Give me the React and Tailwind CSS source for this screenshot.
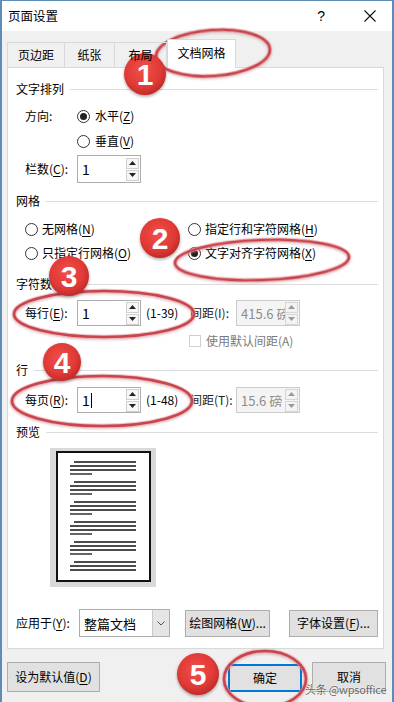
import React from "react";

const Tri = ({ up, gray }) => (
  <svg width="7" height="4" viewBox="0 0 7 4">
    {up ? (
      <polygon points="0,4 7,4 3.5,0" fill={gray ? "#9a9a9a" : "#222"} />
    ) : (
      <polygon points="0,0 7,0 3.5,4" fill={gray ? "#9a9a9a" : "#222"} />
    )}
  </svg>
);

const SpinButtons = ({ gray }) => (
  <div className="flex flex-col justify-center gap-[1px] pr-[1px]">
    <div className={`w-[13px] h-[11px] border flex items-center justify-center ${gray ? "border-[#d6d6d6] bg-[#f3f3f3]" : "border-[#cfcfcf] bg-[#f7f7f7]"}`}>
      <Tri up gray={gray} />
    </div>
    <div className={`w-[13px] h-[11px] border flex items-center justify-center ${gray ? "border-[#d6d6d6] bg-[#f3f3f3]" : "border-[#cfcfcf] bg-[#f7f7f7]"}`}>
      <Tri gray={gray} />
    </div>
  </div>
);

const Spin = ({ value, h = "h-[26px]", cursor }) => (
  <div className={`w-[64px] ${h} border border-[#adadad] bg-white flex items-center`}>
    <div className="flex-1 pl-[4px] text-[14px] leading-none flex items-center">
      {value}
      {cursor && <span className="inline-block w-px h-[15px] bg-black ml-[1px]" />}
    </div>
    <SpinButtons />
  </div>
);

const DisabledSpin = ({ value }) => (
  <div className="w-[64px] h-[26px] border border-[#cccccc] bg-[#f4f4f4] flex items-center overflow-hidden">
    <div className="flex-1 overflow-hidden whitespace-nowrap pl-[4px] text-[13px] leading-none text-[#8d8d8d]">{value}</div>
    <SpinButtons gray />
  </div>
);

const Header = ({ children, mt }) => (
  <div className={`flex items-center h-[18px] pl-[8px] pr-[5px] ${mt}`}>
    <span className="leading-none">{children}</span>
    <div className="flex-1 h-px bg-[#dcdcdc] ml-[6px]" />
  </div>
);

const Radio = ({ checked }) => (
  <div className="w-[13px] h-[13px] rounded-full border border-[#333] bg-white flex items-center justify-center shrink-0">
    {checked && <div className="w-[7px] h-[7px] rounded-full bg-[#222]" />}
  </div>
);

const U = ({ children }) => <span className="underline underline-offset-2">{children}</span>;

const Preview = () => {
  const groups = [0, 20, 40, 60, 80, 100];
  return (
    <div className="ml-[42px] mt-[7px] w-[106px] h-[139px] bg-[#d9d9d9] pt-[3px] pl-[6px]">
      <div className="w-[95px] h-[131px] bg-white border-2 border-[#111]">
        <svg width="91" height="127" viewBox="0 0 91 127">
          {groups.map((g, i) => (
            <g key={i} stroke="#111" strokeWidth="1.3">
              <line x1="16" y1={g + 9} x2="78" y2={g + 9} />
              <line x1="12" y1={g + 13} x2="78" y2={g + 13} />
              <line x1="12" y1={g + 17} x2="78" y2={g + 17} />
              {i < 5 && <line x1="12" y1={g + 21} x2="34" y2={g + 21} />}
            </g>
          ))}
        </svg>
      </div>
    </div>
  );
};

const Annotations = () => (
  <svg className="absolute left-0 top-0 pointer-events-none" width="394" height="702" viewBox="0 0 394 702">
    <defs>
      <radialGradient id="rg" cx="45%" cy="40%" r="60%">
        <stop offset="0%" stopColor="#f0504a" />
        <stop offset="70%" stopColor="#e03a36" />
        <stop offset="100%" stopColor="#c22a2a" />
      </radialGradient>
      <filter id="sh" x="-30%" y="-30%" width="160%" height="160%">
        <feDropShadow dx="0" dy="1.5" stdDeviation="1.8" floodColor="#000" floodOpacity="0.35" />
      </filter>
      <filter id="esh" x="-10%" y="-30%" width="120%" height="160%">
        <feDropShadow dx="0" dy="1" stdDeviation="1.2" floodColor="#8a2a30" floodOpacity="0.35" />
      </filter>
    </defs>
    {[
      [211, 52, 57, 23, -4],
      [260, 259, 87, 20, -2],
      [102, 313, 90, 23, 0],
      [100, 400, 90, 25, 0],
      [263, 678, 41, 28, 0],
    ].map(([cx, cy, rx, ry, rot], i) => (
      <g key={i} transform={`rotate(${rot} ${cx} ${cy})`} filter="url(#esh)">
        <ellipse cx={cx} cy={cy} rx={rx} ry={ry} fill="none" stroke="#e9a3a8" strokeWidth="4.5" opacity="0.6" />
        <ellipse cx={cx} cy={cy} rx={rx} ry={ry} fill="none" stroke="#c9454e" strokeWidth="2.6" />
      </g>
    ))}
    {[
      [143, 73, 21, "1"],
      [158, 237, 20, "2"],
      [67, 275, 20, "3"],
      [60, 361, 19, "4"],
      [196, 673, 21, "5"],
    ].map(([cx, cy, r, t]) => (
      <g key={t}>
        <circle cx={cx} cy={cy} r={r} fill="url(#rg)" filter="url(#sh)" />
        <text
          x={cx}
          y={cy + 10.5}
          textAnchor="middle"
          fill="#fff"
          fontSize="30"
          fontWeight="700"
          fontFamily="'Liberation Sans', Arial, sans-serif"
        >
          {t}
        </text>
      </g>
    ))}
  </svg>
);

export default function App() {
  return (
    <div className="relative w-[394px] h-[702px] overflow-hidden bg-[#f0f0f0] border-x-2 border-t border-[#5d8db5] font-['Noto_Sans_CJK_SC','Liberation_Sans',sans-serif] text-[12px] text-black">
      {/* Title bar */}
      <div className="h-[30px] bg-white flex items-center pl-[6px]">
        <span className="text-[12.5px] leading-none">页面设置</span>
        <span className="ml-auto text-[14px] leading-none font-['Liberation_Sans',sans-serif] mr-[39px]">?</span>
        <svg width="12" height="12" viewBox="0 0 12 12" className="mr-[16px]">
          <path d="M0.5 0.5 L11.5 11.5 M11.5 0.5 L0.5 11.5" stroke="#111" strokeWidth="1.1" />
        </svg>
      </div>

      {/* Tabs */}
      <div className="h-[36px] flex items-end pl-[5px] relative z-10">
        <div className="h-[25px] w-[58px] border border-b-0 border-[#d9d9d9] flex items-center justify-center">页边距</div>
        <div className="h-[25px] w-[50px] border border-b-0 border-l-0 border-[#d9d9d9] flex items-center justify-center">纸张</div>
        <div className="h-[25px] w-[52px] border border-b-0 border-l-0 border-[#d9d9d9] flex items-center justify-center">布局</div>
        <div className="h-[29px] w-[69px] -mb-px bg-white border border-b-0 border-[#d9d9d9] flex items-center justify-center pb-[2px]">文档网格</div>
      </div>

      {/* Panel */}
      <div className="ml-[5px] w-[377px] h-[582px] bg-white border border-[#d9d9d9] flex flex-col">
        <Header mt="mt-[12px]">文字排列</Header>

        <div className="flex items-center h-[20px] mt-[8px] pl-[17px]">
          <span className="w-[52px] leading-none">方向:</span>
          <Radio checked />
          <span className="ml-[5px] leading-none">水平(<U>Z</U>)</span>
        </div>
        <div className="flex items-center h-[20px] mt-[5px] pl-[69px]">
          <Radio />
          <span className="ml-[5px] leading-none">垂直(<U>V</U>)</span>
        </div>
        <div className="flex items-center h-[28px] mt-[4px] pl-[17px]">
          <span className="w-[52px] leading-none">栏数(<U>C</U>):</span>
          <Spin value="1" h="h-[28px]" />
        </div>

        <Header mt="mt-[9px]">网格</Header>
        <div className="flex items-center h-[20px] mt-[9px] pl-[17px]">
          <div className="w-[163px] flex items-center">
            <Radio />
            <span className="ml-[4px] leading-none">无网格(<U>N</U>)</span>
          </div>
          <Radio />
          <span className="ml-[4px] leading-none">指定行和字符网格(<U>H</U>)</span>
        </div>
        <div className="flex items-center h-[20px] mt-[4px] pl-[17px]">
          <div className="w-[163px] flex items-center">
            <Radio />
            <span className="ml-[4px] leading-none">只指定行网格(<U>O</U>)</span>
          </div>
          <Radio checked />
          <span className="ml-[4px] leading-none">文字对齐字符网格(<U>X</U>)</span>
        </div>

        <Header mt="mt-[12px]">字符数</Header>
        <div className="flex items-center h-[26px] mt-[7px] pl-[17px]">
          <span className="w-[52px] leading-none">每行(<U>E</U>):</span>
          <Spin value="1" />
          <span className="ml-[5px] w-[44px] leading-none">(1-39)</span>
          <span className="w-[46px] leading-none text-[#222] whitespace-nowrap">间距(I):</span>
          <DisabledSpin value="415.6 磅" />
        </div>
        <div className="flex items-center h-[18px] mt-[6px] pl-[181px]">
          <div className="w-[12px] h-[12px] border border-[#cfcfcf] bg-white" />
          <span className="ml-[5px] leading-none text-[#7a7a7a]">使用默认间距(A)</span>
        </div>

        <Header mt="mt-[11px]">行</Header>
        <div className="flex items-center h-[26px] mt-[8px] pl-[17px]">
          <span className="w-[52px] leading-none">每页(<U>R</U>):</span>
          <Spin value="1" cursor />
          <span className="ml-[5px] w-[44px] leading-none">(1-48)</span>
          <span className="w-[46px] leading-none text-[#222] whitespace-nowrap">间距(T):</span>
          <DisabledSpin value="15.6 磅" />
        </div>

        <Header mt="mt-[10px]">预览</Header>
        <Preview />

        <div className="flex items-center h-[28px] mt-[22px] pl-[8px]">
          <span className="w-[63px] leading-none">应用于(<U>Y</U>):</span>
          <div className="w-[91px] h-[28px] border border-[#adadad] bg-white flex items-stretch">
            <span className="flex-1 pl-[4px] flex items-center text-[13px] leading-none">整篇文档</span>
            <div className="w-[17px] bg-[#e5e5e5] border-l border-[#c9c9c9] flex items-center justify-center">
              <svg width="8" height="5" viewBox="0 0 8 5">
                <path d="M0.5 0.5 L4 4 L7.5 0.5" fill="none" stroke="#555" strokeWidth="1" />
              </svg>
            </div>
          </div>
          <div className="ml-[15px] w-[85px] h-[27px] bg-[#e1e1e1] border border-[#adadad] flex items-center justify-center leading-none">
            绘图网格(<U>W</U>)...
          </div>
          <div className="ml-[19px] w-[89px] h-[27px] bg-[#e1e1e1] border border-[#adadad] flex items-center justify-center leading-none">
            字体设置(<U>F</U>)...
          </div>
        </div>
      </div>

      {/* Bottom buttons */}
      <div className="flex items-start mt-[13px] pl-[5px]">
        <div className="w-[93px] h-[30px] bg-[#e1e1e1] border border-[#adadad] flex items-center justify-center leading-none">
          设为默认值(<U>D</U>)
        </div>
        <div className="ml-[128px] mt-[2px] w-[74px] h-[28px] bg-[#e1e1e1] border-2 border-[#0078d7] flex items-center justify-center leading-none">
          确定
        </div>
        <div className="ml-[10px] w-[74px] h-[30px] bg-[#e1e1e1] border border-[#adadad] flex items-center justify-center leading-none">
          取消
        </div>
      </div>

      <Annotations />

      <div className="absolute left-[303px] top-[683px] whitespace-nowrap text-[11px] tracking-[-0.2px] leading-none text-[#6a6a6a] [text-shadow:0_0_2px_#fff]">
        头条 @wpsoffice
      </div>
    </div>
  );
}
